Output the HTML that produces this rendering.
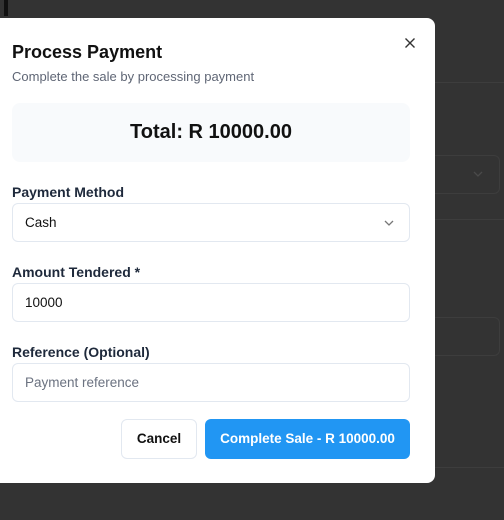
<!DOCTYPE html>
<html><head><meta charset="utf-8"><style>
*{box-sizing:border-box;margin:0;padding:0}
body{width:504px;height:520px;background:#333333;font-family:"Liberation Sans",sans-serif;position:relative;overflow:hidden;color:#0f172a}
.bg{position:absolute;border-color:#3d3d3d;border-style:solid;border-width:0}
.modal{position:absolute;left:-10px;top:18px;width:445px;height:465px;background:#fff;border-radius:8px}
.abs{position:absolute}
.title{left:22px;top:24px;font-size:18px;font-weight:600;color:#111}
.sub{left:22px;top:51px;font-size:13px;color:#5f6675}
.total{left:22px;top:85px;width:398px;height:59px;background:#f8fafc;border-radius:8px;text-align:center;line-height:59px;font-size:20px;font-weight:bold;color:#111}
.lbl{font-size:14px;font-weight:bold;color:#1e293b;left:22px}
.inp{left:22px;width:398px;height:39px;border:1px solid #e2e8f0;border-radius:6px;font-size:13.5px;line-height:37px;padding-left:12px;color:#111}
.btn{top:401px;height:40px;border-radius:6px;font-size:13.5px;font-weight:bold;text-align:center;line-height:38px}
</style></head><body>
<div class="abs" style="left:4px;top:0;width:4px;height:16px;background:#111"></div>
<div class="bg" style="left:435px;top:82px;width:69px;border-top-width:1px"></div>
<div class="bg" style="left:420px;top:155px;width:80px;height:39px;border-width:1px;border-radius:6px"></div>
<svg class="abs" style="left:472px;top:168px" width="12" height="12" viewBox="0 0 12 12"><path d="M2 4l4 4 4-4" fill="none" stroke="#4a4a4a" stroke-width="1.3"/></svg>
<div class="bg" style="left:435px;top:219px;width:69px;border-top-width:1px"></div>
<div class="bg" style="left:420px;top:317px;width:80px;height:39px;border-width:1px;border-radius:6px"></div>
<div class="bg" style="left:435px;top:467px;width:69px;border-top-width:1px"></div>
<div class="modal">
<div class="abs title">Process Payment</div>
<div class="abs sub">Complete the sale by processing payment</div>
<svg class="abs" style="left:414px;top:19px" width="12" height="12" viewBox="0 0 12 12"><path d="M1.5 1.5l9 9M10.5 1.5l-9 9" stroke="#333" stroke-width="1.4"/></svg>
<div class="abs total">Total: R 10000.00</div>
<div class="abs lbl" style="top:166px">Payment Method</div>
<div class="abs inp" style="top:185px">Cash</div>
<svg class="abs" style="left:393px;top:199px" width="12" height="12" viewBox="0 0 12 12"><path d="M2 4l4 4 4-4" fill="none" stroke="#777" stroke-width="1.3"/></svg>
<div class="abs lbl" style="top:246px">Amount Tendered *</div>
<div class="abs inp" style="top:265px">10000</div>
<div class="abs lbl" style="top:326px">Reference (Optional)</div>
<div class="abs inp" style="top:345px;color:#6b7280">Payment reference</div>
<div class="abs btn" style="left:131px;width:76px;border:1px solid #e2e8f0;color:#111">Cancel</div>
<div class="abs btn" style="left:215px;width:205px;background:#2196f3;color:#fff;line-height:40px">Complete Sale - R 10000.00</div>
</div>
</body></html>
